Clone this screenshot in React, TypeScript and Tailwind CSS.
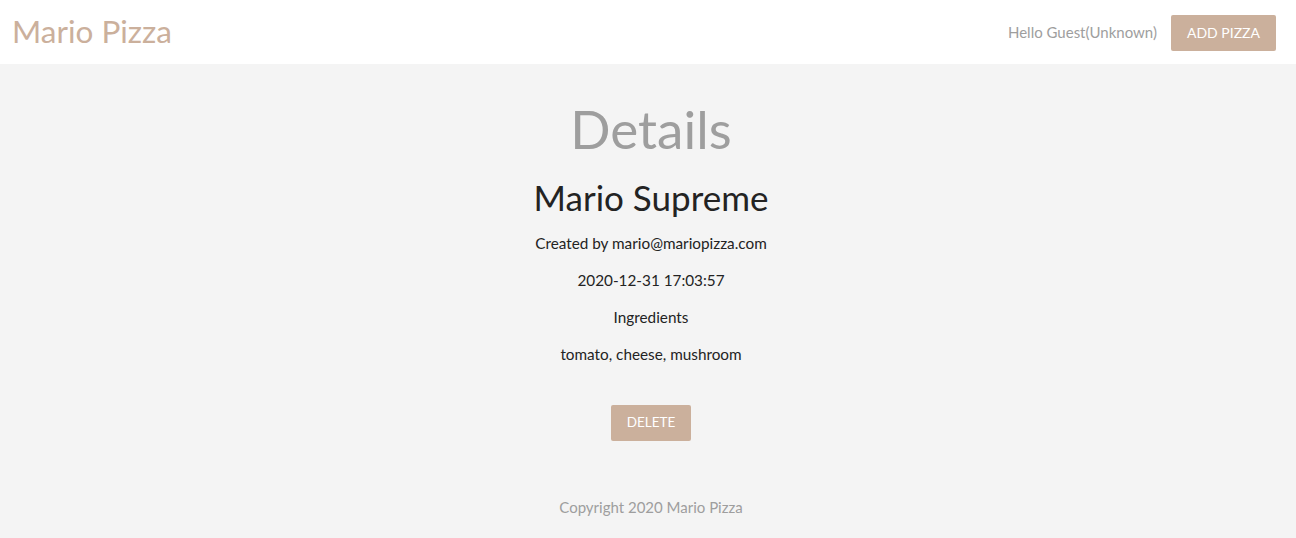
export default function App() {
  return (
    <div className="min-h-[538px] flex flex-col bg-[#f4f4f4] text-[15px] leading-[1.5] text-[#232323]" style={{ fontFamily: 'Lato, "Noto Sans", sans-serif' }}>
      <nav className="h-16 bg-white flex items-center justify-between pl-3 pr-5">
        <a className="text-[31.5px] text-[#cbb09c] leading-none">Mario Pizza</a>
        <div className="flex items-center gap-[14px]">
          <span className="text-[15px] text-[#9e9e9e]">Hello Guest(Unknown)</span>
          <button className="mt-[1px] h-9 px-4 rounded-[2px] bg-[#cbb09c] text-white text-[14px] uppercase">
            Add Pizza
          </button>
        </div>
      </nav>
      <main className="flex-1 flex flex-col items-center text-center pl-[6px]">
        <h2 className="mt-[36px] mb-[20px] text-[53px] leading-[1.1] text-[#9e9e9e]">Details</h2>
        <h4 className="mb-[8px] text-[35px] leading-[1.1]">Mario Supreme</h4>
        <p className="my-[7px] text-[15.3px]">Created by mario@mariopizza.com</p>
        <p className="my-[7px] text-[15.3px]">2020-12-31 17:03:57</p>
        <p className="my-[7px] text-[15.3px]">Ingredients</p>
        <p className="my-[7px] text-[15.3px]">tomato, cheese, mushroom</p>
        <button className="mt-[32px] h-9 px-4 rounded-[2px] bg-[#cbb09c] text-white text-[13.5px] uppercase">
          Delete
        </button>
        <footer className="mt-auto pb-[20px] text-[#9e9e9e]">Copyright 2020 Mario Pizza</footer>
      </main>
    </div>
  );
}
